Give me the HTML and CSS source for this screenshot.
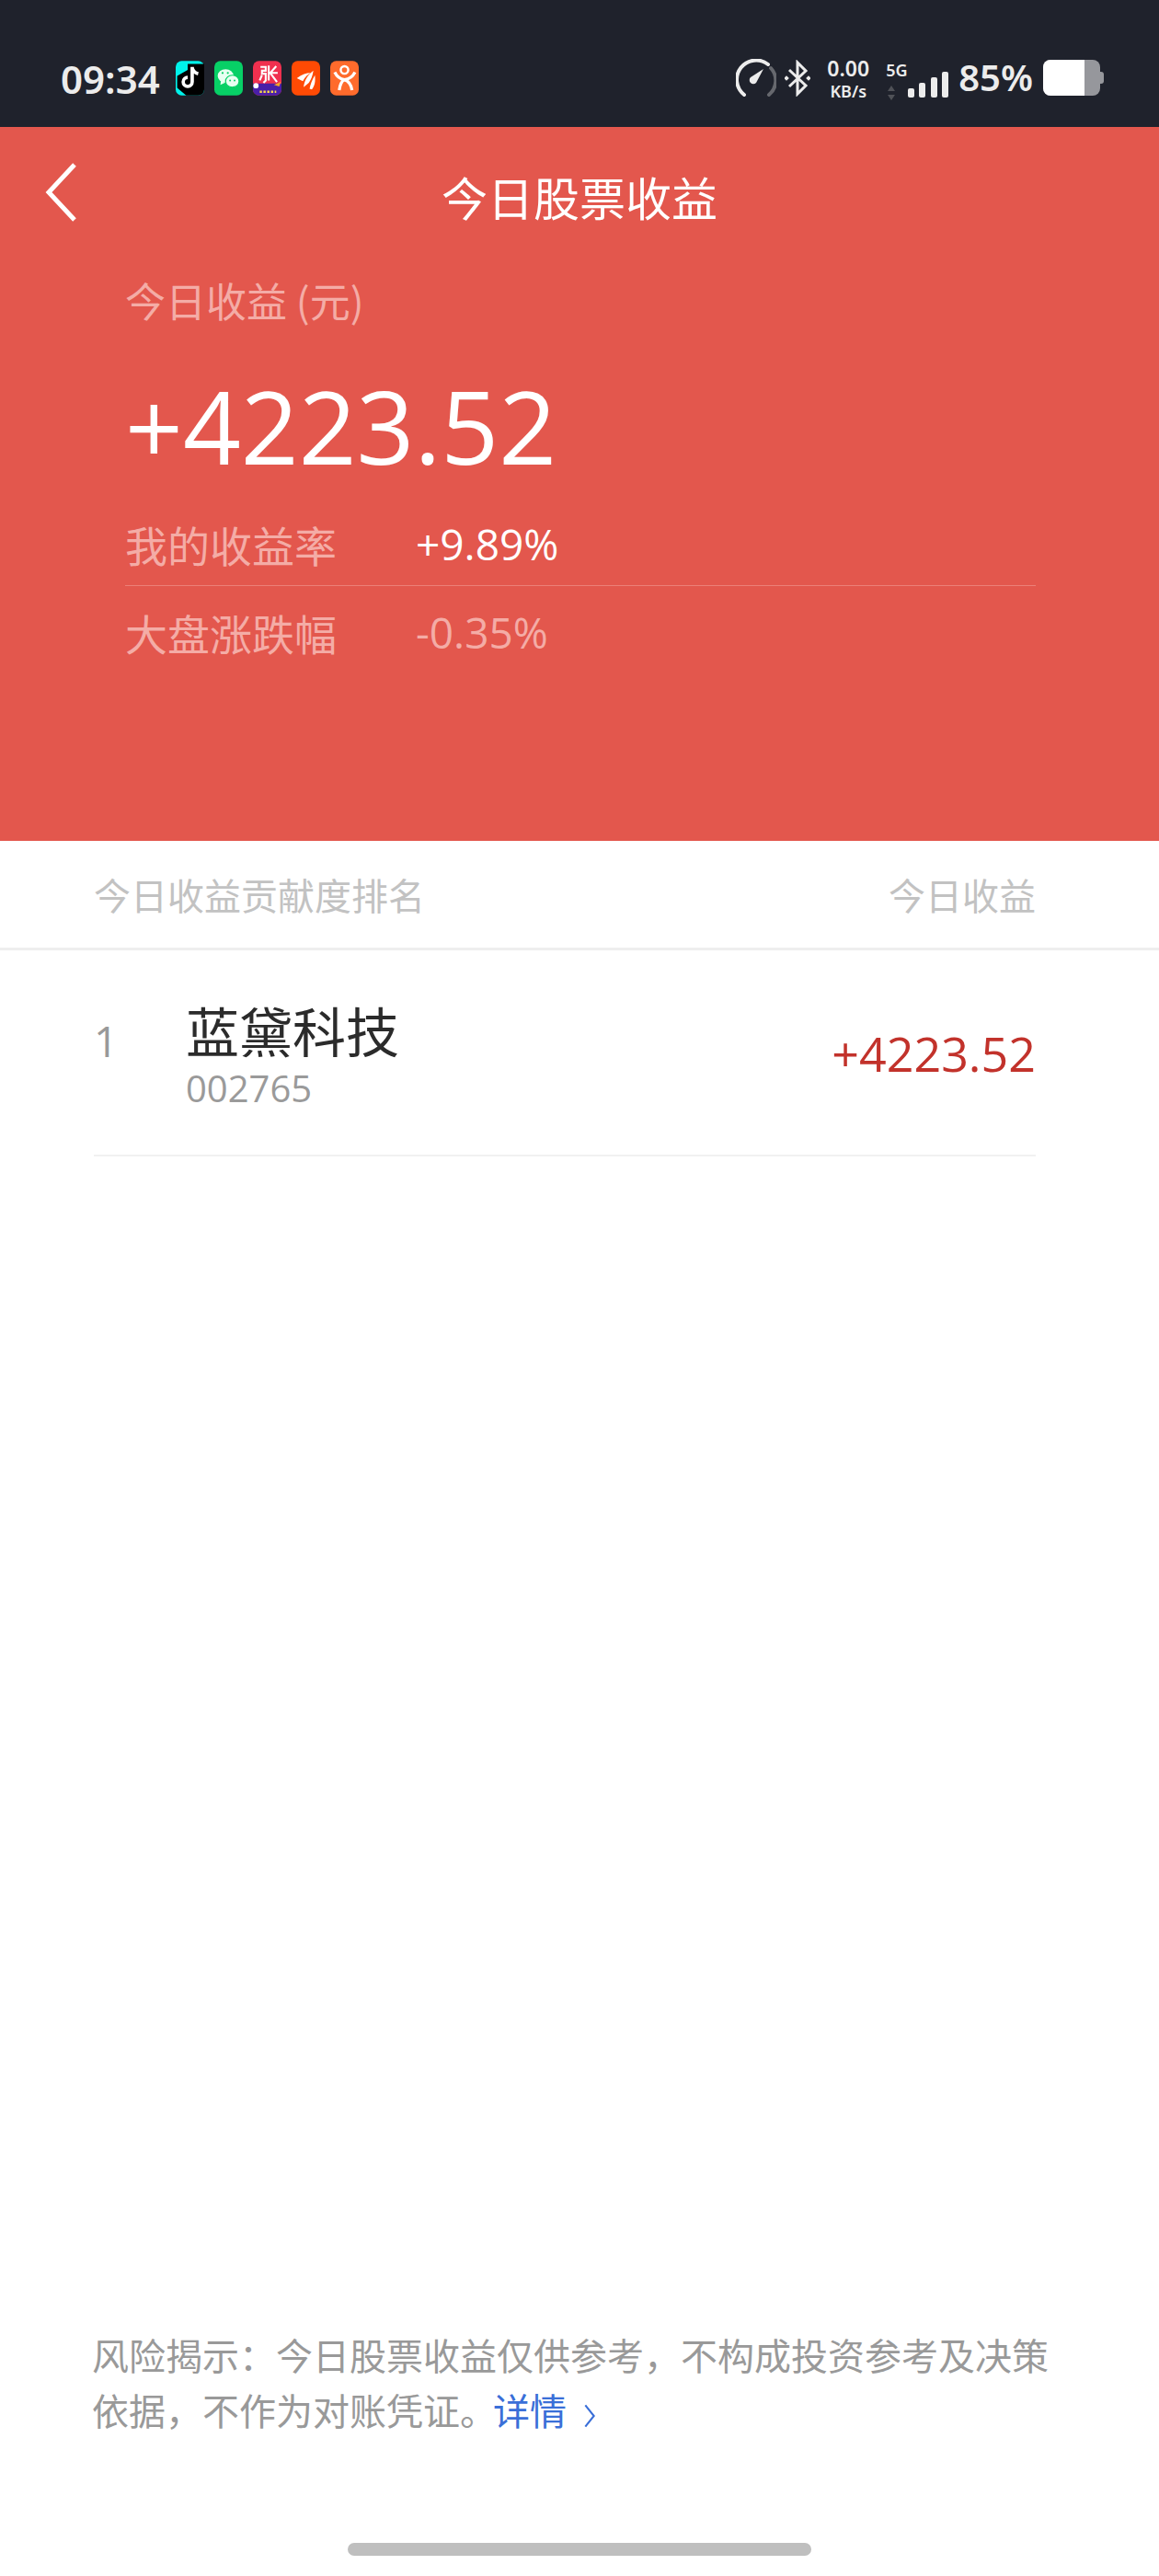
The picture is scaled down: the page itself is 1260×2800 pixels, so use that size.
FILE: index.html
```html
<!DOCTYPE html>
<html lang="zh-CN">
<head>
    <meta charset="UTF-8">
    <title>今日股票收益</title>
    <link rel="stylesheet" href="styles.css">
</head>
<body>
    <div class="status-bar">
        <span class="clock">09:34</span>
        <div class="app-icons">
            <svg class="app" viewBox="0 0 38 46"><rect width="38" height="46" rx="8" fill="#00f2ea"/><path d="M16 4h22v34a8 8 0 0 1-8 8H14L2 36V20L16 12z" fill="#000"/><path d="M22 8v20a6 6 0 1 1-6-6M22 9c1 5 4 7 8 8" fill="none" stroke="#fff" stroke-width="4.5"/></svg>
            <svg class="app" viewBox="0 0 38 46"><rect width="38" height="46" rx="8" fill="#07d066"/><ellipse cx="15" cy="20" rx="10.500" ry="9" fill="#e8fff2"/><path d="M9 26l-1 6 6-3z" fill="#e8fff2"/><ellipse cx="24" cy="27" rx="9" ry="8" fill="#e8fff2" stroke="#07d066" stroke-width="1.500"/><circle cx="21" cy="26" r="1.200" fill="#07d066"/><circle cx="27" cy="26" r="1.200" fill="#07d066"/><circle cx="11" cy="16" r="1.400" fill="#07d066"/><circle cx="18" cy="16" r="1.400" fill="#07d066"/></svg>
            <svg class="app" viewBox="0 0 38 46"><rect width="38" height="46" rx="8" fill="#f0304f"/><path d="M0 30h38v8a8 8 0 0 1-8 8H8a8 8 0 0 1-8-8z" fill="#4a1fa8"/><path d="M10 8h7v5h-5v4h5v9l-3 3M12 19l-3 7M21 6v20M31 7l-8 9 9 12M20 16h13" fill="none" stroke="#fff" stroke-width="2.600"/><circle cx="4" cy="33" r="3.500" fill="#fff"/><path d="M28 32l9-4-2 6z" fill="#f5a623"/><path d="M9 41h22" stroke="#f5d94a" stroke-width="3" stroke-dasharray="3 2"/></svg>
            <svg class="app" viewBox="0 0 38 46"><rect width="38" height="46" rx="8" fill="#ff4a04"/><path d="M7 23c7-5 13-7 18-7-3 2-7 5-10 11zM16 35c1-9 6-17 13-22-1 7-3 12-6 16zM24 37c1-6 3-11 7-18 1 8 0 14-4 19z" fill="#fff"/></svg>
            <svg class="app" viewBox="0 0 38 46"><rect width="38" height="46" rx="8" fill="#ff6b2c"/><circle cx="19" cy="12" r="5" fill="none" stroke="#fff" stroke-width="3"/><path d="M6 15c3 6 7 9 13 10-4 2-6 6-7 14M33 15c-3 6-7 9-14 10 6 2 9 7 10 14" fill="none" stroke="#fff" stroke-width="4"/></svg>
        </div>
        <div class="status-right">
            <svg class="gauge" viewBox="0 0 44 44"><path d="M9 39a20 20 0 0 1 26-33" fill="none" stroke="#ececec" stroke-width="4" stroke-linecap="round"/><path d="M38 10a20 20 0 0 1-2 29" fill="none" stroke="#66686e" stroke-width="4" stroke-linecap="round"/><path d="M16 20l14-9-8 15a4 4 0 0 1-6-6z" fill="#ececec"/></svg>
            <svg class="bt" viewBox="0 0 28 40"><path d="M5 11l18 17-9 9V3l9 9L5 29" fill="none" stroke="#ececec" stroke-width="3"/><rect x="0" y="18" width="4" height="4" fill="#ececec" transform="rotate(45 2 20)"/><rect x="24" y="18" width="4" height="4" fill="#ececec" transform="rotate(45 26 20)"/></svg>
            <div class="speed"><span>0.00</span><small>KB/s</small></div>
            <div class="net">
                <span class="net-label">5G</span>
                <svg class="arrows" viewBox="0 0 10 16"><path d="M5 0l4 6H1z" fill="#4f5157"/><path d="M5 16l4-6H1z" fill="#4f5157"/></svg>
            </div>
            <svg class="signal" viewBox="0 0 44 28"><rect x="0" y="18" width="7" height="10" rx="2"/><rect x="12" y="12" width="7" height="16" rx="2"/><rect x="25" y="6" width="7" height="22" rx="2"/><rect x="37" y="0" width="7" height="28" rx="2"/></svg>
            <span class="percent">85%</span>
            <div class="battery"><div class="battery-fill"></div></div>
        </div>
    </div>

    <div class="hero">
        <div class="nav">
            <svg class="back" viewBox="0 0 36 66"><path d="M33 3L5 33l28 30" fill="none" stroke="#fff" stroke-width="5"/></svg>
            <h1>今日股票收益</h1>
        </div>
        <div class="summary">
            <p class="summary-label">今日收益 (元)</p>
            <p class="summary-value">+4223.52</p>
            <div class="metric metric-first">
                <span class="metric-name">我的收益率</span>
                <span class="metric-num bright">+9.89%</span>
            </div>
            <div class="metric">
                <span class="metric-name">大盘涨跌幅</span>
                <span class="metric-num">-0.35%</span>
            </div>
        </div>
    </div>

    <div class="rank-head">
        <span>今日收益贡献度排名</span>
        <span>今日收益</span>
    </div>

    <div class="rank-row">
        <span class="rank-no">1</span>
        <div class="stock">
            <div class="stock-name">蓝黛科技</div>
            <div class="stock-code">002765</div>
        </div>
        <span class="stock-gain">+4223.52</span>
    </div>

    <div class="spacer"></div>

    <p class="notice">风险揭示：今日股票收益仅供参考，不构成投资参考及决策依据，不作为对账凭证。<span class="notice-link">详情<svg class="chevron" viewBox="0 0 12 24"><path d="M2 2l8 10-8 10" fill="none" stroke="#3a6fd8" stroke-width="1.800"/></svg></span></p>

    <div class="home-bar"></div>
</body>
</html>
```

FILE: styles.css
```css
html, body { height: 100%; }
body { margin: 0; background: #fff; display: flex; flex-direction: column; height: 2800px; font-family: "Noto Sans CJK SC", "Noto Sans", sans-serif; color: #333; }
p, h1 { margin: 0; }

.status-bar { height: 138px; background: #1f222c; color: #ececec; display: flex; align-items: flex-start; padding: 0 64px 0 66px; box-sizing: border-box; }
.clock { font-family: "Noto Sans", sans-serif; font-size: 42px; font-weight: 600; line-height: 46px; margin-top: 63px; }
.app-icons { display: flex; gap: 11px; margin: 66px 0 0 17px; }
.app { width: 31px; height: 38px; display: block; }
.status-right { margin-left: auto; display: flex; align-items: flex-start; }
.gauge { width: 44px; height: 44px; margin-top: 64px; }
.bt { width: 28px; height: 40px; margin: 65px 0 0 9px; }
.speed { display: flex; flex-direction: column; align-items: center; width: 52px; margin: 60px 0 0 15px; font-family: "Noto Sans", sans-serif; font-weight: 600; }
.speed span { font-size: 23px; line-height: 28px; }
.speed small { font-size: 18px; line-height: 22px; }
.net { width: 26px; margin: 64px 0 0 15px; display: flex; flex-direction: column; font-family: "Noto Sans", sans-serif; font-weight: 600; }
.net-label { font-size: 18px; line-height: 24px; }
.arrows { width: 10px; height: 16px; margin: 5px 0 0 1px; }
.signal { width: 44px; height: 28px; margin: 78px 0 0 -2px; fill: #ececec; }
.percent { font-family: "Noto Sans", sans-serif; font-size: 40px; font-weight: 600; line-height: 46px; margin: 61px 0 0 11px; }
.battery { width: 62px; height: 39px; margin: 65px 0 0 11px; background: #96979c; border-radius: 8px; position: relative; }
.battery::after { content: ""; position: absolute; right: -4px; top: 13px; width: 4px; height: 13px; background: #96979c; border-radius: 0 3px 3px 0; }
.battery-fill { width: 45px; height: 39px; background: #fff; border-radius: 8px 0 0 8px; }

.hero { height: 776px; background: #e3574d; color: #fff; }
.nav { height: 110px; position: relative; display: flex; justify-content: center; align-items: center; padding-top: 4px; box-sizing: border-box; }
.nav h1 { font-size: 50px; font-weight: 400; line-height: 64px; margin-top: 36px; }
.back { position: absolute; left: 46px; top: 38px; width: 40px; height: 66px; }
.summary { padding: 48px 134px 0 136px; }
.summary-label { font-size: 44px; line-height: 60px; color: #f4aca6; }
.summary-value { font-family: "Open Sans", sans-serif; font-size: 110px; line-height: 120px; margin-top: 46px; }
.metric { display: flex; height: 100px; align-items: center; box-sizing: border-box; color: #f4aca6; }
.metric-first { margin-top: 24px; border-bottom: 1px solid #ec8078; height: 91px; }
.metric-name { font-size: 46px; width: 316px; }
.metric-num { font-family: "Open Sans", sans-serif; font-size: 46px; }
.metric-num.bright { color: #fff; }

.rank-head { height: 116px; border-bottom: 3px solid #eee; display: flex; justify-content: space-between; align-items: center; padding: 0 134px 0 102px; font-size: 40px; color: #c2c2c2; }
.rank-row { height: 224px; margin: 0 134px 0 102px; border-bottom: 2px solid #f1f1f1; display: flex; align-items: center; box-sizing: border-box; }
.rank-no { font-family: "Open Sans", sans-serif; font-size: 46px; color: #999; width: 100px; margin-top: -26px; }
.stock { flex: 1; }
.stock-name { font-size: 58px; line-height: 78px; color: #2b2b2b; }
.stock-code { font-family: "Open Sans", sans-serif; font-size: 40px; line-height: 50px; color: #9a9a9a; }
.stock-gain { font-family: "Open Sans", sans-serif; font-size: 52px; color: #c2322b; }

.spacer { flex: 1; }
.notice { margin: 0 96px 0 100px; font-size: 40px; line-height: 60px; color: #999; }
.notice-link { color: #3a6fd8; margin-left: -4px; }
.chevron { width: 14px; height: 28px; margin-left: 18px; vertical-align: -4px; }
.home-bar { width: 504px; height: 14px; background: #bfbfbf; border-radius: 7px; margin: 115px auto 22px; }
```
